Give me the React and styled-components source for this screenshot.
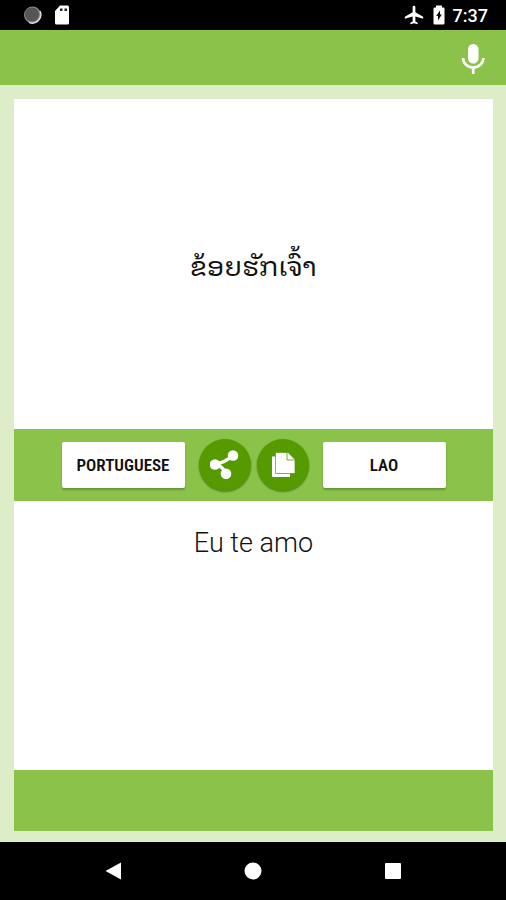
import React from "react";
import styled, { createGlobalStyle } from "styled-components";

const colors = {
  primary: "#8bc34a",
  page: "#dcedc8",
  action: "#559b00",
  text: "#111",
};

const GlobalStyle = createGlobalStyle`
  *, *::before, *::after { box-sizing: border-box; }
  body {
    margin: 0;
    background: ${colors.page};
    color: ${colors.text};
    font-family: Roboto, "Liberation Sans", sans-serif;
  }
`;

const Screen = styled.div`
  display: flex;
  flex-direction: column;
  min-height: 100vh;
`;

const StatusBar = styled.div`
  display: flex;
  align-items: center;
  justify-content: space-between;
  height: 30px;
  padding: 0 18px 0 22px;
  background: #000;
  color: #fff;
`;

const StatusGroup = styled.div`
  display: flex;
  align-items: center;
  gap: ${(p) => p.$gap}px;
`;

const Clock = styled.time`
  font-size: 18px;
  line-height: 30px;
  font-weight: 500;
  padding-top: 2px;
`;

const AppBar = styled.header`
  display: flex;
  align-items: center;
  justify-content: flex-end;
  height: 55px;
  padding: 2px 20px 0;
  background: ${colors.primary};
`;

const IconButton = styled.button`
  display: flex;
  align-items: center;
  justify-content: center;
  padding: 0;
  border: 0;
  background: none;
  color: #fff;
  cursor: pointer;
`;

const Main = styled.main`
  flex: 1;
  display: flex;
  flex-direction: column;
  padding: 14px 13px 11px 14px;
`;

const Panel = styled.section`
  display: flex;
  justify-content: center;
  align-items: ${(p) => (p.$top ? "flex-start" : "center")};
  flex: ${(p) => p.$grow} 0 0;
  background: #fff;
`;

const Phrase = styled.p`
  margin: 0;
  padding: 24px 16px;
  font-size: 27px;
  line-height: 36px;
  font-weight: 300;
  text-align: center;
`;

const LaoPhrase = styled(Phrase)`
  font-family: "Noto Sans Lao Looped", "Noto Sans Lao", "DejaVu Sans", sans-serif;
  font-weight: 400;
`;

const Toolbar = styled.div`
  display: flex;
  align-items: center;
  justify-content: center;
  gap: 14px;
  height: 72px;
  background: ${colors.primary};
`;

const Actions = styled.div`
  display: flex;
  gap: 6px;
`;

const LanguageButton = styled.button`
  width: 123px;
  height: 46px;
  padding: 0;
  border: 0;
  border-radius: 2px;
  background: #fff;
  color: ${colors.text};
  font-family: "Roboto Condensed", Roboto, sans-serif;
  font-size: 17px;
  font-weight: 600;
  text-transform: uppercase;
  box-shadow: 0 2px 2px rgba(0, 0, 0, 0.25);
  cursor: pointer;
`;

const RoundButton = styled(IconButton)`
  width: 52px;
  height: 52px;
  border-radius: 50%;
  background: ${colors.action};
  box-shadow: 0 1px 2px rgba(0, 0, 0, 0.4);
`;

const BottomStrip = styled.div`
  height: 61px;
  background: ${colors.primary};
`;

const NavBar = styled.nav`
  display: flex;
  justify-content: center;
  height: 58px;
  background: #000;
`;

const NavButton = styled(IconButton)`
  width: 140px;
`;

const SyncIcon = () => (
  <svg width="20" height="20" viewBox="0 0 20 20" aria-hidden="true">
    <circle cx="10.5" cy="10" r="8.5" fill="#888" />
    <path d="M18 6 A8.5 8.5 0 0 1 7 17.4" fill="none" stroke="#ddd" strokeWidth="1.5" />
    <circle cx="10" cy="9.5" r="7" fill="#555" />
  </svg>
);

const SdCardIcon = () => (
  <svg width="16" height="20" viewBox="0 0 16 20" aria-hidden="true">
    <path d="M6 .5h7.5a1.5 1.5 0 0 1 1.5 1.5v16a1.5 1.5 0 0 1-1.5 1.5h-11A1.5 1.5 0 0 1 1 18V6z" fill="#fff" />
    <path d="M6 3.500h2.500v2.500H6zM10.500 3.500H13v2.500h-2.500z" fill="#222" />
  </svg>
);

const PlaneIcon = () => (
  <svg width="22" height="22" viewBox="0 0 24 24" fill="currentColor" aria-hidden="true">
    <path d="M22 16v-2l-8.500-5V3.500a1.500 1.500 0 0 0-3 0V9L2 14v2l8.500-2.500V19L8 20.500V22l4-1 4 1v-1.500L13.500 19v-5.500z" />
  </svg>
);

const BatteryIcon = () => (
  <svg width="12" height="20" viewBox="0 0 12 20" aria-hidden="true">
    <path d="M3 .5h6v2h1.200a1.300 1.300 0 0 1 1.300 1.300v14.400a1.300 1.300 0 0 1-1.300 1.300H1.800A1.300 1.300 0 0 1 .5 18.200V3.800A1.300 1.300 0 0 1 1.800 2.500H3z" fill="#fff" />
    <path d="M7 5.500v4h1.800L5 15.500v-4.500H3.200z" fill="#000" />
  </svg>
);

const MicIcon = () => (
  <svg width="26" height="32" viewBox="0 0 26 32" aria-hidden="true">
    <rect x="8" y="1" width="10.500" height="19.500" rx="5.200" fill="#fff" />
    <path d="M3 15a10.200 9.500 0 0 0 20.400 0M13.200 24v7" fill="none" stroke="#fff" strokeWidth="2.600" />
  </svg>
);

const ShareIcon = () => (
  <svg width="30" height="30" viewBox="0 0 30 30" aria-hidden="true">
    <path d="M23 5.500C18.500 9.500 12.500 13 4.500 14.500C10.500 15 13 18 16.500 24" fill="none" stroke="#fff" strokeWidth="3.400" />
    <circle cx="23" cy="5.500" r="5.300" fill="#fff" />
    <circle cx="5" cy="14.500" r="5.300" fill="#fff" />
    <circle cx="16" cy="23.700" r="5.300" fill="#fff" />
  </svg>
);

const CopyIcon = () => (
  <svg width="24" height="26" viewBox="0 0 24 26" aria-hidden="true">
    <path d="M1 4.500h5v17h13V25H2a1 1 0 0 1-1-1z" fill="#fff" />
    <path d="M4.500 .5H17l7 7v14h-19.500z" fill="#fff" stroke={colors.action} strokeWidth=".7" />
    <path d="M16 .5v7.500h7.500" fill="none" stroke={colors.action} strokeWidth=".8" />
  </svg>
);

const NavIcon = ({ children }) => (
  <svg width="18" height="18" viewBox="0 0 18 18" fill="#fff" aria-hidden="true">
    {children}
  </svg>
);

export default function App() {
  return (
    <>
      <GlobalStyle />
      <Screen>
        <StatusBar>
          <StatusGroup $gap={12}>
            <SyncIcon />
            <SdCardIcon />
          </StatusGroup>
          <StatusGroup $gap={8}>
            <PlaneIcon />
            <BatteryIcon />
            <Clock>7:37</Clock>
          </StatusGroup>
        </StatusBar>
        <AppBar>
          <IconButton type="button" aria-label="Voice input">
            <MicIcon />
          </IconButton>
        </AppBar>
        <Main>
          <Panel $grow={330}>
            <LaoPhrase lang="lo">ຂ້ອຍຮັກເຈົ້າ</LaoPhrase>
          </Panel>
          <Toolbar>
            <LanguageButton type="button">Portuguese</LanguageButton>
            <Actions>
              <RoundButton type="button" aria-label="Share">
                <ShareIcon />
              </RoundButton>
              <RoundButton type="button" aria-label="Copy">
                <CopyIcon />
              </RoundButton>
            </Actions>
            <LanguageButton type="button">Lao</LanguageButton>
          </Toolbar>
          <Panel $grow={269} $top>
            <Phrase lang="pt">Eu te amo</Phrase>
          </Panel>
          <BottomStrip />
        </Main>
        <NavBar>
          <NavButton type="button" aria-label="Back">
            <NavIcon>
              <path d="M1.500 9 17 .5v17z" />
            </NavIcon>
          </NavButton>
          <NavButton type="button" aria-label="Home">
            <NavIcon>
              <circle cx="9" cy="9" r="8.500" />
            </NavIcon>
          </NavButton>
          <NavButton type="button" aria-label="Recent apps">
            <NavIcon>
              <rect x="1" y="1" width="16" height="16" rx="1" />
            </NavIcon>
          </NavButton>
        </NavBar>
      </Screen>
    </>
  );
}
